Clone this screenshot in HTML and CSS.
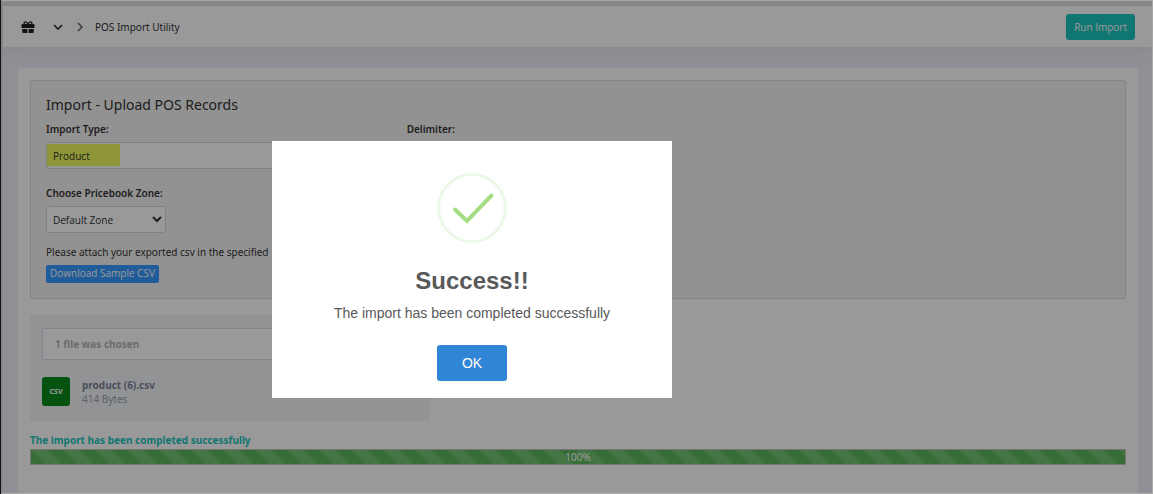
FILE: index.html
```html
<!DOCTYPE html>
<html lang="en">
<head>
    <meta charset="UTF-8">
    <meta name="viewport" content="width=device-width, initial-scale=1.0">
    <title>POS Import Utility</title>
    <link rel="stylesheet" href="styles.css">
</head>
<body>
<div class="app">
    <header class="topbar">
        <nav class="breadcrumb">
            <a href="#" class="gift" aria-label="Home">
                <svg width="14" height="12" viewBox="0 0 14 12">
                    <path d="M7 3.500C6 .8 4.800.7 4 .9 2.800 1.200 2.900 3 3.800 3.500M7 3.500C8 .8 9.200.7 10 .9c1.200.3 1.100 2.100.2 2.600" fill="none" stroke="#222" stroke-width="1.300"/>
                    <path fill="#222" d="M1.500 3h11a1 1 0 0 1 1 1v3H.5V4a1 1 0 0 1 1-1zM1.200 8h5.200v4H2.200a1 1 0 0 1-1-1zM7.600 8h5.200v3a1 1 0 0 1-1 1H7.600z"/>
                </svg>
            </a>
            <button class="menu-btn" aria-label="Menu">
                <svg width="10" height="6" viewBox="0 0 10 6"><path d="M1 1l4 4 4-4" fill="none" stroke="#222" stroke-width="1.500"/></svg>
            </button>
            <svg width="6" height="10" viewBox="0 0 6 10"><path d="M1 1l4 4-4 4" fill="none" stroke="#5e6278" stroke-width="1.500"/></svg>
            <span class="crumb">POS Import Utility</span>
        </nav>
        <button class="btn btn-run">Run Import</button>
    </header>

    <main class="card">
        <section class="panel">
            <h1>Import - Upload POS Records</h1>
            <div class="row">
                <div class="field">
                    <label for="import-type">Import Type:</label>
                    <select id="import-type" class="select select-type">
                        <option>Product</option>
                    </select>
                </div>
                <div class="field">
                    <label for="delimiter">Delimiter:</label>
                    <select id="delimiter" class="select">
                        <option>Comma</option>
                    </select>
                </div>
            </div>
            <div class="field">
                <label for="zone">Choose Pricebook Zone:</label>
                <select id="zone" class="select">
                    <option>Default Zone</option>
                </select>
            </div>
            <p class="hint">Please attach your exported csv in the specified</p>
            <a href="#" class="download">Download Sample CSV</a>
        </section>

        <section class="upload">
            <input type="file" id="csv-file" class="file-input">
            <label for="csv-file" class="file-label">1 file was chosen</label>
            <div class="file">
                <span class="file-icon">CSV</span>
                <div>
                    <div class="file-name">product (6).csv</div>
                    <div class="file-size">414 Bytes</div>
                </div>
            </div>
        </section>

        <p class="status">The import has been completed successfully</p>
        <div class="progress">
            <div class="progress-bar" role="progressbar" aria-valuenow="100" aria-valuemin="0" aria-valuemax="100" style="width: 100%">100%</div>
        </div>
    </main>

    <div class="overlay">
        <div class="modal" role="dialog" aria-labelledby="modal-title">
            <svg class="modal-icon" width="70" height="70" viewBox="0 0 70 70">
                <circle cx="35" cy="35" r="33.500" fill="none" stroke="#edf8e7" stroke-width="3"/>
                <path d="M18 36.500l12 11.500 24.500-25.500" fill="none" stroke="#a5dc86" stroke-width="4" stroke-linecap="round"/>
            </svg>
            <h2 id="modal-title">Success!!</h2>
            <p>The import has been completed successfully</p>
            <button class="btn btn-ok">OK</button>
        </div>
    </div>
</div>
</body>
</html>
```
FILE: styles.css
```css
* {
    box-sizing: border-box;
}

body {
    margin: 0;
    border-left: 1px solid #10101c;
    background-color: #eef0f8;
    font-family: "Noto Sans", "Open Sans", sans-serif;
    font-size: 10px;
    line-height: 14px;
    color: #333;
}

h1, h2, p {
    margin: 0;
}

.app {
    position: relative;
    display: flex;
    flex-direction: column;
    min-height: 100vh;
    border: 1px solid #aaa;
    border-left: 2px solid #888;
}

.topbar {
    display: flex;
    align-items: center;
    justify-content: space-between;
    padding: 8px 17px 7px 18px;
    border-top: 5px solid #e2e2e2;
    background-color: #fff;
    box-shadow: 0 2px 16px rgba(0, 0, 0, 0.06);
}

.breadcrumb {
    display: flex;
    align-items: center;
}

.gift {
    display: flex;
    margin-right: 18px;
}

.menu-btn {
    display: flex;
    margin-right: 14px;
    padding: 0;
    border: none;
    background: none;
}

.crumb {
    margin-left: 12px;
}

.btn {
    border: none;
    border-radius: 3px;
    color: #fff;
    cursor: pointer;
}

.btn-run {
    height: 26px;
    padding: 0 8px;
    background-color: #1bc5bd;
    font: 10px "Open Sans", "Noto Sans", sans-serif;
}

.card {
    flex: 1;
    margin: 21px 14px 0 15px;
    padding: 12px;
    border-radius: 3px 3px 0 0;
    background-color: #fff;
}

.panel {
    padding: 15px;
    border: 1px solid #dcdcdc;
    border-radius: 3px;
    background-color: #f3f3f3;
}

h1 {
    margin-bottom: 8px;
    font-size: 14px;
    font-weight: 400;
    line-height: 18px;
}

.row {
    display: grid;
    grid-template-columns: repeat(3, 1fr);
    column-gap: 18px;
    margin-bottom: 17px;
}

.field label {
    display: block;
    margin-bottom: 6px;
    font-weight: 600;
}

.select {
    display: block;
    width: 120px;
    height: 27px;
    padding: 0 2px;
    border: 1px solid #d8d8d8;
    border-radius: 3px;
    background-color: #fff;
    font: 10px "Open Sans", "Noto Sans", sans-serif;
    color: #333;
}

.select-type {
    width: 100%;
    background: linear-gradient(#edfa5c, #edfa5c) 0 1px / 73px 22px no-repeat #fff;
}

.hint {
    margin: 12px 0 6px;
}

.download {
    display: inline-block;
    height: 18px;
    padding: 0 4px;
    border-radius: 2px;
    background-color: #3699ff;
    color: #fff;
    font-family: "Open Sans", "Noto Sans", sans-serif;
    text-decoration: none;
    line-height: 16px;
}

.upload {
    max-width: 400px;
    margin: 16px 0 12px;
    padding: 13px 12px 15px;
    border-radius: 3px;
    background-color: #f3f6f9;
}

.file-input {
    position: absolute;
    width: 1px;
    height: 1px;
    opacity: 0;
}

.file-label {
    display: block;
    padding: 8px 12px;
    border: 1px solid #d6def0;
    border-radius: 2px;
    background-color: #fff;
    color: #b5b5b5;
    font-weight: 700;
}

.file {
    display: flex;
    align-items: center;
    gap: 12px;
    margin-top: 17px;
}

.file-icon {
    width: 28px;
    border-radius: 3px;
    background-color: #088a1c;
    color: #fff;
    font-size: 7px;
    font-weight: 700;
    line-height: 29px;
    text-align: center;
}

.file-name {
    color: #7e8299;
    font-weight: 700;
}

.file-size {
    color: #9a9db0;
}

.status {
    margin-bottom: 2px;
    color: #1bc5bd;
    font-weight: 700;
}

.progress {
    border: 1px solid #c4c4c4;
}

.progress-bar {
    background-color: #5cb85c;
    background-image: linear-gradient(45deg, rgba(255, 255, 255, 0.15) 25%, transparent 25%, transparent 50%, rgba(255, 255, 255, 0.15) 50%, rgba(255, 255, 255, 0.15) 75%, transparent 75%, transparent);
    background-size: 32px 32px;
    color: #fff;
    text-align: center;
}

.overlay {
    position: absolute;
    inset: 0;
    padding: 140px 269px;
    background-color: rgba(0, 0, 0, 0.4);
}

.modal {
    display: flex;
    flex-direction: column;
    align-items: center;
    width: 400px;
    padding: 32px 20px 17px;
    background-color: #fff;
    color: #595959;
    font-family: "Liberation Sans", Arial, sans-serif;
}

.modal h2 {
    margin: 23px 0 8px;
    font-size: 24px;
    line-height: 30px;
}

.modal p {
    margin-bottom: 23px;
    font-size: 14px;
    line-height: 18px;
}

.btn-ok {
    height: 36px;
    padding: 0 25px;
    background-color: #3085d6;
    font: 14px "Liberation Sans", Arial, sans-serif;
}
```
